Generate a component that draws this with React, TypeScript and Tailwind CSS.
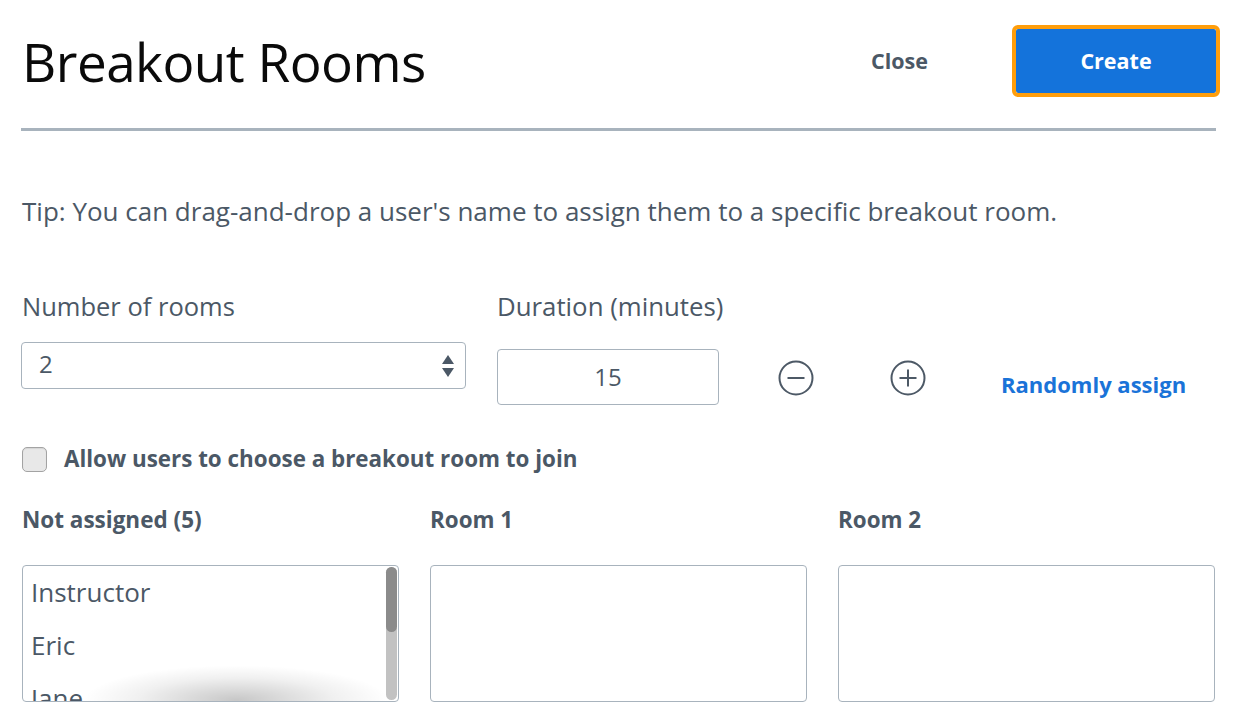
import React from 'react';

const users = ['Instructor', 'Eric', 'Jane', 'Maria', 'Tom'];

function CircleIcon({ plus }: { plus?: boolean }) {
  return (
    <svg width="38" height="38" viewBox="0 0 38 38" fill="none" stroke="#4d5966" strokeWidth="2">
      <circle cx="19" cy="19" r="16.5" />
      <line x1="10.5" y1="19" x2="27.5" y2="19" />
      {plus && <line x1="19" y1="10.5" x2="19" y2="27.5" />}
    </svg>
  );
}

export default function App() {
  return (
    <div
      className="w-[1234px] h-[722px] overflow-hidden bg-white pl-[21px] pr-[18px] text-[#4b5866]"
      style={{ fontFamily: '"Open Sans", "Noto Sans", sans-serif' }}
    >
      {/* Header */}
      <div className="h-[122px] flex items-center justify-between">
        <h1 className="text-[53px] leading-none text-[#0a0a0a] tracking-[-0.5px] pl-[1px]">Breakout Rooms</h1>
        <div className="flex items-center">
          <button className="text-[21.5px] font-bold text-[#4b5866] mr-[88px]">Close</button>
          <button className="w-[200px] h-[64px] bg-[#1473db] text-white text-[21.5px] font-bold rounded-[2px] outline-[4px] outline-solid outline-[#ff9e0c]">
            Create
          </button>
        </div>
      </div>
      <div className="mt-[6px] h-[3px] bg-[#a8b3bd]" />

      <p className="mt-[65px] text-[26px] leading-[30px] pl-[1px] whitespace-nowrap">
        Tip: You can drag-and-drop a user's name to assign them to a specific breakout room.
      </p>

      {/* Settings row */}
      <div className="mt-[65px] flex items-start whitespace-nowrap">
        <div className="w-[445px] shrink-0">
          <div className="text-[25.5px] leading-[30px] pl-[1px]">Number of rooms</div>
          <div className="mt-[21px] h-[47px] border-[1.5px] border-[#a8b3bd] rounded-[4px] flex items-center justify-between pl-[17px] pr-[10px]">
            <span className="text-[24px] -mt-[3px]">2</span>
            <svg width="14" height="24" viewBox="0 0 14 24" fill="#4b5866">
              <path d="M7 1 L13 10 H1 Z" />
              <path d="M7 23 L13 14 H1 Z" />
            </svg>
          </div>
        </div>
        <div className="w-[222px] ml-[31px] shrink-0">
          <div className="text-[25.8px] leading-[30px]">Duration (minutes)</div>
          <div className="mt-[28px] h-[56px] border-[1.5px] border-[#a8b3bd] rounded-[4px] flex items-center justify-center">
            <span className="text-[24px]">15</span>
          </div>
        </div>
        <button className="ml-[58px] mt-[68px] shrink-0">
          <CircleIcon />
        </button>
        <button className="ml-[74px] mt-[68px] shrink-0">
          <CircleIcon plus />
        </button>
        <button className="ml-[74px] mt-[78px] text-[22px] leading-[30px] font-bold text-[#1a73d8] shrink-0">
          Randomly assign
        </button>
      </div>

      {/* Checkbox */}
      <label className="mt-[39px] h-[30px] flex items-center pl-[1px]">
        <span className="w-[25px] h-[25px] rounded-[5px] border border-[#a3a3a3] bg-[#e8e8e8] shadow-[inset_0_1px_1px_rgba(0,0,0,0.08)]" />
        <span className="ml-[17px] text-[22.4px] font-bold whitespace-nowrap">Allow users to choose a breakout room to join</span>
      </label>

      {/* Rooms */}
      <div className="mt-[31px] grid grid-cols-[377px_377px_377px] gap-x-[31px] pl-[1px]">
        <div className="text-[22.5px] leading-[30px] font-bold whitespace-nowrap">Not assigned (5)</div>
        <div className="text-[22.4px] leading-[30px] font-bold">Room 1</div>
        <div className="text-[22.4px] leading-[30px] font-bold">Room 2</div>

        <div className="mt-[30px] h-[137px] relative overflow-hidden border-[1.5px] border-[#a8b3bd] rounded-[4px]">
          <ul className="pt-[10px] pl-[8px]">
            {users.map((u) => (
              <li key={u} className="h-[53px] text-[26px] leading-[32px]">
                {u}
              </li>
            ))}
          </ul>
          <div className="absolute left-[60px] right-[8px] bottom-[-34px] h-[70px] bg-[radial-gradient(ellipse_at_center,rgba(0,0,0,0.22),rgba(0,0,0,0.06)_45%,transparent_70%)]" />
          <div className="absolute top-[1px] right-[1px] bottom-[1px] w-[11px] rounded-[6px] bg-[#c2c2c2]">
            <div className="h-[65px] rounded-[6px] bg-[#8b8b8b]" />
          </div>
        </div>
        <div className="mt-[30px] h-[137px] border-[1.5px] border-[#a8b3bd] rounded-[4px]" />
        <div className="mt-[30px] h-[137px] border-[1.5px] border-[#a8b3bd] rounded-[4px]" />
      </div>
    </div>
  );
}
